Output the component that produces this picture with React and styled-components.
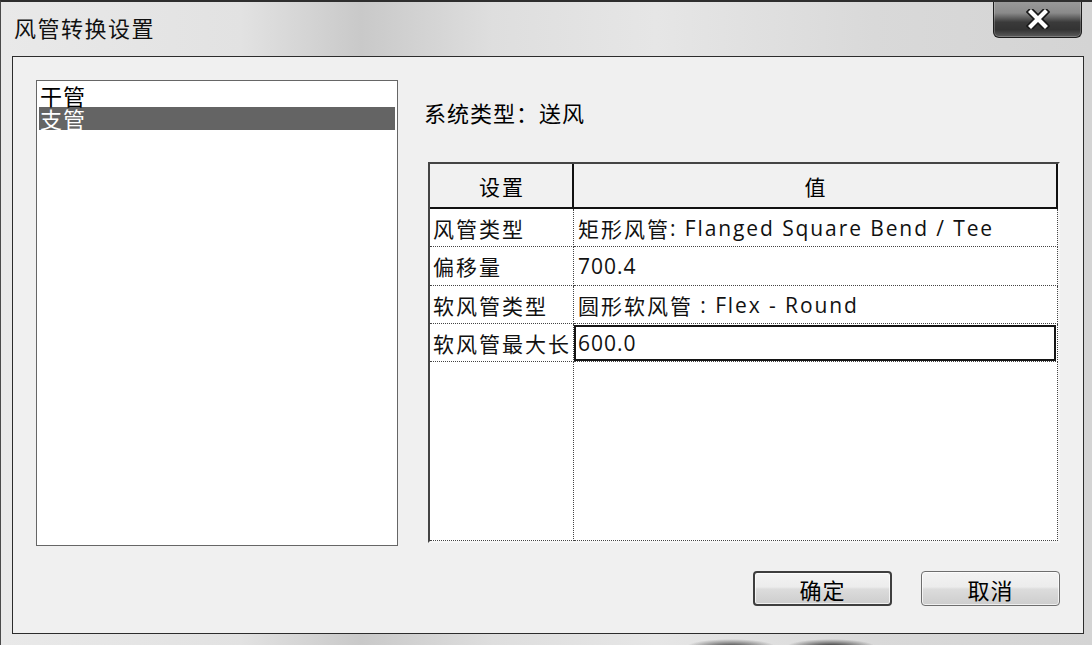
import React from 'react';
import styled, { createGlobalStyle } from 'styled-components';

const GlobalStyle = createGlobalStyle`
  html, body { margin: 0; padding: 0; background: #d0d0d0; }
  body { font-family: "Noto Sans CJK SC", sans-serif; color: #000; }
  * { box-sizing: border-box; }
`;

const Window = styled.div`
  width: 1092px;
  height: 645px;
  display: flex;
  flex-direction: column;
  overflow: hidden;
  border-top: 2px solid #2e2e2e;
  border-left: 1px solid #4a4a4a;
  background:
    radial-gradient(ellipse 45px 8px at 730px 645px, #3a3a3a 0%, rgba(60,60,60,0) 100%),
    radial-gradient(ellipse 45px 8px at 830px 645px, #222 0%, rgba(40,40,40,0) 100%),
    linear-gradient(90deg, #e9e9e9 0%, #e2e2e2 22%, #c9c9c9 33%, #dedede 45%, #e6e6e6 60%, #d9d9d9 80%, #d4d4d4 100%);
`;

const TitleBar = styled.div`
  height: 54px;
  display: flex;
  align-items: flex-start;
  padding-left: 13px;
  flex-shrink: 0;
`;

const Title = styled.div`
  font-size: 22px;
  line-height: 50px;
  color: #111;
  letter-spacing: 1.5px;
`;

const CloseButton = styled.div`
  margin-left: auto;
  margin-right: 10px;
  margin-top: -2px;
  width: 89px;
  height: 38px;
  border: 1px solid #1e1e1e;
  border-top: none;
  border-radius: 0 0 6px 6px;
  background: linear-gradient(180deg, #9c9c9c 0%, #8a8a8a 35%, #5a5a5a 50%, #3a3a3a 60%, #333 80%, #5c5c5c 100%);
  box-shadow: inset 0 0 0 1px rgba(255,255,255,0.22);
  display: flex;
  align-items: center;
  justify-content: center;
`;

const Body = styled.div`
  flex: 1;
  margin: 0 8px 11px 11px;
  border: 1px solid #2c2c2c;
  background: #f0f0f0;
  display: flex;
  padding: 23px 23px 0 23px;
`;

const List = styled.div`
  width: 362px;
  height: 466px;
  border: 1px solid #666;
  background: #fff;
  padding: 3px 2px;
  flex-shrink: 0;
`;

const ListItem = styled.div`
  height: 23px;
  font-size: 22px;
  line-height: 23px;
  letter-spacing: 1px;
  padding-left: 1px;
  background: ${p => (p.$selected ? '#646464' : 'transparent')};
  color: ${p => (p.$selected ? '#fff' : '#000')};
`;

const RightColumn = styled.div`
  flex: 1;
  margin-left: 26px;
  display: flex;
  flex-direction: column;
`;

const SystemLabel = styled.div`
  margin-top: 18px;
  height: 28px;
  font-size: 22px;
  line-height: 28px;
  letter-spacing: 1px;
  color: #000;
`;

const Table = styled.div`
  margin-top: 36px;
  margin-left: 4px;
  width: 632px;
  height: 381px;
  background: #fff;
  border-top: 2px solid #444;
  border-left: 2px solid #444;
  border-right: 2px solid #f6f6f6;
  border-bottom: 2px solid #f6f6f6;
  display: grid;
  grid-template-columns: 144px 1fr;
  grid-template-rows: 45px 38px 39px 38px 38px 1fr;
`;

const HeaderCell = styled.div`
  background: #f1f1f1;
  border-bottom: 2px solid #111;
  border-right: 2px solid #111;
  display: flex;
  align-items: center;
  justify-content: center;
  font-size: 21px;
  letter-spacing: 2px;
  padding-left: 2px;
  color: #000;
`;

const Cell = styled.div`
  border-bottom: 1px dotted #444;
  border-right: 1px dotted #444;
  display: flex;
  align-items: center;
  padding-left: ${p => (p.$value ? '4px' : '3px')};
  font-size: 21px;
  letter-spacing: 2px;
  color: #111;
  white-space: pre;
  overflow: hidden;
`;

const Latin = styled.span`
  font-family: "Open Sans", "Noto Sans CJK SC", sans-serif;
  letter-spacing: ${p => (p.$num ? '1px' : '1.9px')};
`;

const EditCell = styled.div`
  border-bottom: 1px dotted #444;
  border-right: 1px dotted #444;
  padding: 1px 1px 0 0;
  display: flex;
`;

const EditBox = styled.div`
  flex: 1;
  border: 2px solid #141414;
  display: flex;
  align-items: center;
  padding-left: 2px;
  font-size: 21px;
  color: #111;
`;

const FillerCell = styled.div`
  border-bottom: 1px dotted #444;
  border-right: 1px dotted #444;
`;

const ButtonRow = styled.div`
  margin-top: 28px;
  display: flex;
  justify-content: flex-end;
  gap: 29px;
`;

const Button = styled.div`
  width: 139px;
  height: 35px;
  border-radius: 4px;
  border: ${p => (p.$default ? '2px solid #3e3e3e' : '1px solid #6e6e6e')};
  background: linear-gradient(180deg, #f3f3f3 0%, #ececec 45%, #dcdcdc 52%, #cdcdcd 100%);
  box-shadow: inset 0 0 0 1px rgba(255,255,255,0.7);
  display: flex;
  align-items: center;
  justify-content: center;
  font-size: 22px;
  letter-spacing: 1px;
  color: #000;
`;

const rows = [
  ['风管类型', '矩形风管', ': Flanged Square Bend / Tee', false],
  ['偏移量', '', '700.4', true],
  ['软风管类型', '圆形软风管', ' : Flex - Round', false],
];

export default function App() {
  return (
    <>
      <GlobalStyle />
      <Window>
        <TitleBar>
          <Title>风管转换设置</Title>
          <CloseButton>
            <svg width="24" height="20" viewBox="0 0 24 20">
              <path d="M5 3 L19 17 M19 3 L5 17" stroke="#1a1a1a" strokeWidth="7.5" strokeLinecap="square" />
              <path d="M5 3 L19 17 M19 3 L5 17" stroke="#fff" strokeWidth="4.2" strokeLinecap="square" />
            </svg>
          </CloseButton>
        </TitleBar>
        <Body>
          <List>
            <ListItem>干管</ListItem>
            <ListItem $selected>支管</ListItem>
          </List>
          <RightColumn>
            <SystemLabel>系统类型：送风</SystemLabel>
            <Table>
              <HeaderCell>设置</HeaderCell>
              <HeaderCell>值</HeaderCell>
              {rows.map(([k, cjk, latin, num]) => (
                <React.Fragment key={k}>
                  <Cell>{k}</Cell>
                  <Cell $value>
                    {cjk}
                    <Latin $num={num}>{latin}</Latin>
                  </Cell>
                </React.Fragment>
              ))}
              <Cell>软风管最大长</Cell>
              <EditCell>
                <EditBox>
                  <Latin $num>600.0</Latin>
                </EditBox>
              </EditCell>
              <FillerCell />
              <FillerCell />
            </Table>
            <ButtonRow>
              <Button $default>确定</Button>
              <Button>取消</Button>
            </ButtonRow>
          </RightColumn>
        </Body>
      </Window>
    </>
  );
}
